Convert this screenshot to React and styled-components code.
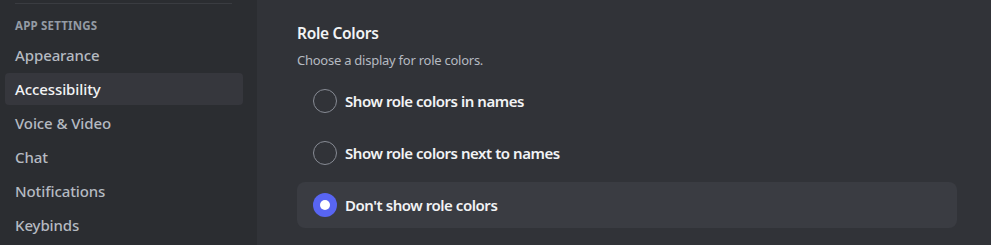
import React from "react";
import styled, { createGlobalStyle } from "styled-components";

const GlobalStyle = createGlobalStyle`
  html, body {
    margin: 0;
    padding: 0;
    background: #313338;
    font-family: "Noto Sans", "Open Sans", sans-serif;
  }
`;

const Layout = styled.div`
  display: flex;
  width: 991px;
  height: 245px;
  overflow: hidden;
`;

const Sidebar = styled.nav`
  width: 257px;
  flex-shrink: 0;
  background: #2b2d31;
  padding: 3px 14px 0 5px;
  box-sizing: border-box;
`;

const Separator = styled.div`
  height: 1px;
  margin: 0 11px 0 10px;
  background: #3a3c41;
`;

const SectionHeader = styled.h3`
  margin: 0;
  padding: 14px 10px 5px;
  font-size: 11.5px;
  line-height: 16px;
  font-weight: 700;
  letter-spacing: 0.2px;
  text-transform: uppercase;
  color: #949ba4;
`;

const NavItem = styled.div`
  height: 32px;
  margin-bottom: 2px;
  padding: 0 10px;
  display: flex;
  align-items: center;
  border-radius: 4px;
  font-size: 15px;
  font-weight: 500;
  letter-spacing: -0.1px;
  color: ${(props) => (props.active ? "#f2f3f5" : "#b5bac1")};
  background: ${(props) => (props.active ? "#36373d" : "transparent")};
`;

const Main = styled.main`
  flex: 1;
  background: #313338;
  padding: 23px 34px 0 40px;
`;

const Title = styled.h2`
  margin: 0;
  font-size: 15.5px;
  line-height: 20px;
  font-weight: 600;
  letter-spacing: -0.3px;
  color: #f2f3f5;
`;

const Description = styled.p`
  margin: 7px 0 8px;
  font-size: 13px;
  line-height: 20px;
  letter-spacing: -0.25px;
  color: #b5bac1;
`;

const RadioGroup = styled.div`
  display: flex;
  flex-direction: column;
  gap: 6px;
`;

const RadioRow = styled.label`
  height: 46px;
  padding: 0 16px;
  display: flex;
  align-items: center;
  gap: 8px;
  border-radius: 8px;
  background: ${(props) => (props.checked ? "#3a3c42" : "transparent")};
  font-size: 15px;
  font-weight: 600;
  letter-spacing: -0.45px;
  color: #f2f3f5;
`;

const RadioCircle = styled.span`
  width: 24px;
  height: 24px;
  flex-shrink: 0;
  box-sizing: border-box;
  border-radius: 50%;
  border: ${(props) => (props.checked ? "none" : "1.5px solid #878b94")};
  background: ${(props) => (props.checked ? "#5865f2" : "transparent")};
  display: flex;
  align-items: center;
  justify-content: center;
  &::after {
    content: "";
    display: ${(props) => (props.checked ? "block" : "none")};
    width: 10px;
    height: 10px;
    border-radius: 50%;
    background: #ffffff;
  }
`;

const navItems = [
  "Appearance",
  "Accessibility",
  "Voice & Video",
  "Chat",
  "Notifications",
  "Keybinds",
];

const options = [
  "Show role colors in names",
  "Show role colors next to names",
  "Don't show role colors",
];

const App = () => {
  const selected = 2;
  return (
    <Layout>
      <GlobalStyle />
      <Sidebar>
        <Separator />
        <SectionHeader>App Settings</SectionHeader>
        {navItems.map((item) => (
          <NavItem key={item} active={item === "Accessibility"}>
            {item}
          </NavItem>
        ))}
      </Sidebar>
      <Main>
        <Title>Role Colors</Title>
        <Description>Choose a display for role colors.</Description>
        <RadioGroup>
          {options.map((option, i) => (
            <RadioRow key={option} checked={i === selected}>
              <RadioCircle checked={i === selected} />
              {option}
            </RadioRow>
          ))}
        </RadioGroup>
      </Main>
    </Layout>
  );
};

export default App;
